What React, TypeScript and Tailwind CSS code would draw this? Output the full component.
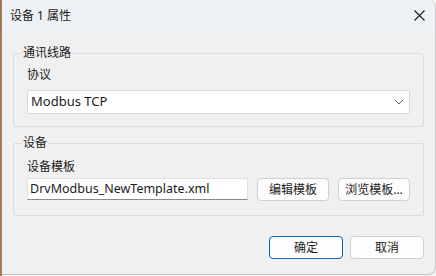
import * as React from 'react';

const font = { fontFamily: '"Noto Sans", "Noto Sans CJK SC", sans-serif' };

const Chevron = () => (
  <svg width="10" height="6" viewBox="0 0 10 6" fill="none" stroke="#5f5f5f" strokeWidth="1">
    <path d="M1 1l4 4 4-4" />
  </svg>
);

const CloseIcon = () => (
  <svg width="11" height="11" viewBox="0 0 11 11" fill="none" stroke="#1a1a1a" strokeWidth="1.1">
    <path d="M0.5 0.5l10 10M10.5 0.5l-10 10" />
  </svg>
);

const Button: React.FC<{ children: React.ReactNode; primary?: boolean; className?: string }> = ({ children, primary, className }) => (
  <button
    className={`h-[23px] bg-[#fdfdfd] rounded-[4px] text-[12px] leading-none text-[#1b1b1b] ${
      primary ? 'border border-[#0067c0]' : 'border border-[#d0d0d0]'
    } ${className ?? ''}`}
  >
    {children}
  </button>
);

export default function App() {
  return (
    <div className="w-[436px] h-[276px] flex bg-[#f3f3f3] text-[#1b1b1b]" style={font}>
      {/* desktop peeking at left edge */}
      <div className="w-[2px] h-full bg-[#a47a52]" />

      <div className="flex-1 h-[275px] flex flex-col bg-[#f0f0f0] rounded-r-[8px] border-r border-b border-[#c4c4c4] overflow-hidden">
        {/* title bar */}
        <div className="h-[31px] flex items-center justify-between pl-[8px] pr-[10px] bg-[#eef2f6]">
          <span className="text-[12px]">设备 1 属性</span>
          <CloseIcon />
        </div>

        <div className="flex-1 flex flex-col px-[11px]">
          {/* group 1 */}
          <fieldset className="mt-[14px] border border-[#dcdcdc] rounded-[2px] px-[8px] pb-[12px]">
            <legend className="px-[1px] text-[12px] leading-[16px]">通讯线路</legend>
            <div className="px-[5px]">
              <div className="text-[12px] leading-[16px] mt-[6px]">协议</div>
              <div className="mt-[7px] h-[24px] flex items-center justify-between bg-white border border-[#d9d9d9] rounded-[2px] pl-[3px] pr-[5px]">
                <span className="text-[13px]">Modbus TCP</span>
                <Chevron />
              </div>
            </div>
          </fieldset>

          {/* group 2 */}
          <fieldset className="mt-[8px] border border-[#dcdcdc] rounded-[2px] px-[8px] pb-[14px]">
            <legend className="px-[1px] text-[12px] leading-[16px]">设备</legend>
            <div className="px-[5px]">
              <div className="text-[12px] leading-[16px] mt-[8px]">设备模板</div>
              <div className="mt-[3px] flex items-start gap-[9px]">
                <div className="w-[221px] h-[22px] flex items-center bg-white border border-[#e0e0e0] border-b-[#8a8a8a] pl-[2px]">
                  <span className="text-[12.5px]">DrvModbus_NewTemplate.xml</span>
                </div>
                <Button className="w-[72px]">编辑模板</Button>
                <Button className="w-[72px]">浏览模板...</Button>
              </div>
            </div>
          </fieldset>

          {/* dialog buttons */}
          <div className="mt-[20px] flex justify-end gap-[7px]">
            <Button primary className="w-[74px]">确定</Button>
            <Button className="w-[74px]">取消</Button>
          </div>
        </div>
      </div>
    </div>
  );
}
